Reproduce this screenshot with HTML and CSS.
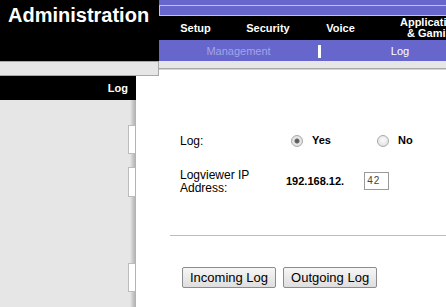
FILE: index.html
```html
<!DOCTYPE html>
<html lang="en">
<head>
    <meta charset="UTF-8"/>
    <title>Administration - Log</title>
    <link rel="stylesheet" href="styles.css">
</head>
<body>

<!-- Header: brand + main tabs -->
<div class="header">
    <div class="brand">
        <h1>Administration</h1>
    </div>
    <div class="nav">
        <div class="nav-strip"></div>
        <div class="nav-box"></div>
        <div class="tabs">
            <div class="tab tab-setup">Setup</div>
            <div class="tab tab-security">Security</div>
            <div class="tab tab-voice">Voice</div>
            <div class="tab tab-apps">Applications<br>&amp; Gaming</div>
        </div>
        <div class="subtabs">
            <div class="subtab subtab-off">Management</div>
            <div class="subtab-sep"></div>
            <div class="subtab">Log</div>
        </div>
    </div>
</div>

<div class="underbar">
    <div class="underbar-left"></div>
    <div class="underbar-right"></div>
</div>

<!-- Page body -->
<div class="main">
    <div class="side">
        <div class="side-title">Log</div>
        <div class="side-rail">
            <div class="notch notch-1"></div>
            <div class="notch notch-2"></div>
            <div class="notch notch-3"></div>
        </div>
    </div>

    <div class="content">
        <div class="form">
            <div class="label label-log">Log:</div>
            <div class="value">
                <label class="opt"><input type="radio" name="log" checked><span>Yes</span></label>
                <label class="opt opt-no"><input type="radio" name="log"><span>No</span></label>
            </div>

            <div class="label label-ip">Logviewer IP<br>Address:</div>
            <div class="value value-ip">
                <span class="ip-prefix">192.168.12.</span>
                <input class="ip-input" type="text" value="42" maxlength="3">
            </div>
        </div>

        <hr class="divider">

        <div class="buttons">
            <button type="button" class="btn">Incoming Log</button>
            <button type="button" class="btn">Outgoing Log</button>
        </div>
    </div>
</div>

</body>
</html>
```

FILE: styles.css
```css
body {
  margin: 0;
  font-family: "Liberation Sans", Arial, sans-serif;
  background: #fff;
  color: #000;
  width: 446px;
  height: 307px;
  overflow: hidden;
}

/* Header */
.header {
  display: grid;
  grid-template-columns: 159px 1fr;
  height: 61px;
}
.brand {
  background: #000;
}
.brand h1 {
  margin: 0;
  padding: 3px 0 0 8px;
  font-size: 20px;
  line-height: 24px;
  font-weight: bold;
  color: #fff;
}
.nav {
  background: #000;
  overflow: hidden;
}
.nav-strip {
  height: 5px;
  background: #6666cc;
}
.nav-box {
  height: 9px;
  background: #6666cc;
  border: 1px solid #c4c4d8;
  border-right: none;
}
.tabs {
  display: flex;
  height: 24px;
  align-items: center;
  color: #fff;
  font-size: 11px;
  font-weight: bold;
  white-space: nowrap;
}
.tab {
  flex: none;
  text-align: center;
}
.tab-setup { width: 73px; }
.tab-security { width: 72px; }
.tab-voice { width: 73px; }
.tab-apps {
  width: 112px;
  line-height: 11px;
}
.subtabs {
  display: flex;
  align-items: center;
  height: 21px;
  background: #6666cc;
  color: #fff;
  font-size: 11px;
  white-space: nowrap;
}
.subtab {
  flex: none;
  width: 158px;
  text-align: center;
}
.subtab-off {
  width: 159px;
  color: #a4a4e6;
}
.subtab-sep {
  flex: none;
  width: 3px;
  height: 13px;
  margin-top: 2px;
  background: #fff;
}

/* Bar under the header */
.underbar {
  display: grid;
  grid-template-columns: 159px 1fr;
  height: 15px;
}
.underbar-left {
  background: #e6e6e6;
  border: 1px solid #a8a8a8;
  border-left: none;
}
.underbar-right {
  height: 7px;
  background: #e6e6e6;
  border-bottom: 1px solid #a8a8a8;
  box-shadow: 0 1px 0 #d4d4d4;
}

/* Main area */
.main {
  display: grid;
  grid-template-columns: 136px 1fr;
  height: 231px;
}
.side {
  display: flex;
  flex-direction: column;
}
.side-title {
  height: 24px;
  line-height: 24px;
  background: #000;
  color: #fff;
  font-size: 11px;
  font-weight: bold;
  text-align: right;
  padding-right: 8px;
}
.side-rail {
  flex: 1;
  display: flex;
  flex-direction: column;
  align-items: flex-end;
  background: linear-gradient(to right, #e6e6e6 130px, #d2d2d2 132px, #bdbdbd 134px, #b0b0b0 136px);
}
.notch {
  width: 6px;
  background: #fff;
  border: 1px solid #bcbcbc;
  border-right: none;
  margin-right: 1px;
}
.notch-1 { margin-top: 25px; height: 27px; }
.notch-2 { margin-top: 13px; height: 28px; }
.notch-3 { margin-top: 66px; height: 27px; }

.content {
  padding: 55px 0 0 34px;
}
.form {
  display: grid;
  grid-template-columns: 106px 1fr;
  row-gap: 18px;
  align-items: center;
  margin-left: 10px;
}
.label {
  font-size: 12px;
}
.label-log {
  line-height: 20px;
}
.label-ip {
  line-height: 13px;
}
.value {
  display: flex;
  align-items: center;
  font-size: 11px;
  font-weight: bold;
}
.opt {
  display: inline-flex;
  align-items: center;
  gap: 9px;
}
.opt span {
  margin-bottom: 3px;
}
.opt-no {
  margin-left: 41px;
}
.opt input {
  appearance: none;
  -webkit-appearance: none;
  margin: 0 0 0 5px;
  width: 12px;
  height: 12px;
  border-radius: 50%;
  border: 1px solid #a9a9a9;
  background: radial-gradient(circle at 50% 40%, #fbfbfb, #dcdcdc);
}
.opt input:checked {
  background: radial-gradient(circle, #555 0, #666 2px, #e8e8e8 3px, #dcdcdc 100%);
}
.value-ip {
  margin-bottom: 3px;
}
.ip-input {
  margin-left: 20px;
  width: 25px;
  height: 18px;
  box-sizing: border-box;
  border: 1px solid #9a9a9a;
  padding: 0 2px;
  font-family: "Liberation Sans", Arial, sans-serif;
  font-size: 10px;
  letter-spacing: 1px;
  color: #444;
}

.divider {
  margin: 40px 0 0;
  border: none;
  border-top: 1px solid #b8b8e6;
  height: 0;
}

.buttons {
  display: flex;
  gap: 7px;
  margin: 31px 0 0 12px;
}
.btn {
  height: 21px;
  padding: 0 7px;
  font-family: "Liberation Sans", Arial, sans-serif;
  font-size: 13px;
  color: #000;
  background: linear-gradient(#f6f6f6, #dedede);
  border: 1px solid #8c8c8c;
  border-radius: 2px;
}
```
